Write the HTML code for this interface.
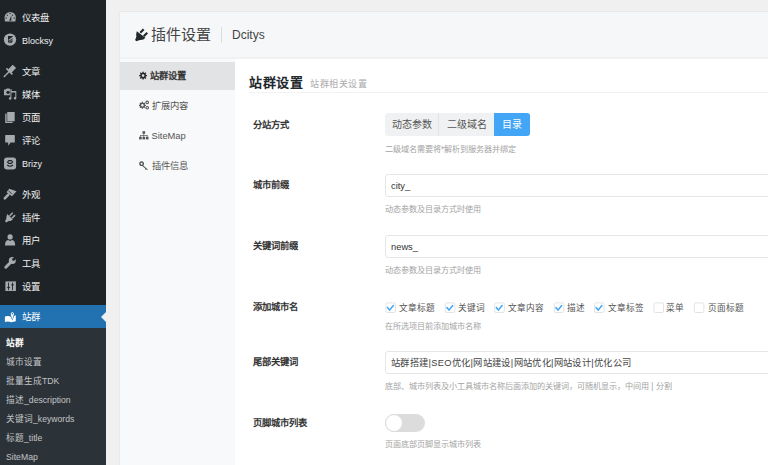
<!DOCTYPE html>
<html lang="zh-CN">
<head>
<meta charset="utf-8">
<style>
*{margin:0;padding:0;box-sizing:border-box}
html,body{width:768px;height:465px;overflow:hidden;background:#f0f0f1;font-family:"Liberation Sans",sans-serif;position:relative}
.a{position:absolute;white-space:nowrap}
#side{position:absolute;left:0;top:0;width:106px;height:465px;background:#1d2327}
#sub{position:absolute;left:0;top:328px;width:106px;height:137px;background:#2c3338}
#act{position:absolute;left:0;top:305px;width:106px;height:23px;background:#2271b1}
.mi{position:absolute;left:22px;height:14px;line-height:14px;font-size:9.4px;color:#f0f0f1}
.ic{position:absolute;left:4px;width:13px;height:13px}
.si{position:absolute;left:6px;height:14px;line-height:14px;font-size:8.67px;color:#c3c4c7}
#arrow{position:absolute;left:101px;top:312px;width:0;height:0;border-top:5px solid transparent;border-bottom:5px solid transparent;border-right:5px solid #f0f0f1}
#panel{position:absolute;left:119px;top:11px;width:662px;height:470px;background:#fff;border:1px solid #e9e9ea}
#hdr{position:absolute;left:120px;top:12px;width:660px;height:47px;background:#f6f7f9;border-bottom:2px solid #f0f1f3}
#nav{position:absolute;left:120px;top:59px;width:115px;height:420px;background:#f8f9fa}
#navact{position:absolute;left:120px;top:62px;width:115px;height:28px;background:#e2e3e5}
.ni{position:absolute;left:150px;height:14px;line-height:14px;font-size:9.33px;color:#555}
.lbl{position:absolute;left:253px;height:14px;line-height:14px;font-size:9.33px;font-weight:bold;color:#333}
.help{position:absolute;left:385px;height:12px;line-height:12px;font-size:8.15px;color:#a3a3a3}
.inp{position:absolute;left:385px;width:400px;height:23px;border:1px solid #e5e6e8;border-radius:3px;background:#fff}
.inpt{position:absolute;left:391px;height:14px;line-height:14px;font-size:9.33px;color:#333}
.cb{position:absolute;top:303px;width:10px;height:10px;border:1px solid #d4d6d9;border-radius:2px;background:#fff}
.cbl{position:absolute;top:301px;height:14px;line-height:14px;font-size:8.67px;color:#555;letter-spacing:0.1px}
</style>
</head>
<body>
<div id="side"></div>
<div id="sub"></div>
<div id="act"></div>
<div id="arrow"></div>
<svg class="a" style="left:0;top:0" width="106" height="465" viewBox="0 0 106 465">
<g fill="#a7aaad">
<path d="M4.9,21.6 L4.6,17.2 A5.6,5.3 0 0 1 15.8,17.2 L15.4,21.6 Z"/>
<g fill="#1d2327"><circle cx="10.1" cy="13.5" r="0.65"/><circle cx="7.3" cy="15.2" r="0.65"/><circle cx="12.6" cy="15.2" r="0.65"/><circle cx="6.1" cy="18" r="0.65"/><circle cx="14.2" cy="18" r="0.65"/>
<path d="M9.3,20.8 L11.3,15.2 L11.3,20.8 Z"/></g>
<circle cx="10" cy="39.6" r="6.15"/>
<path fill="#1d2327" d="M8,36.1 H12.7 V37.6 L12.4,38.6 V41.4 Q12.3,42.7 11,42.7 H8 Z"/>
<path d="M8.6,40.4 L12.9,37.2" stroke="#a7aaad" stroke-width="1.1"/>
<path d="M8.3,42.6 L12.6,39.4" stroke="#a7aaad" stroke-width="0.6"/>
<g transform="translate(14.4,66.4) rotate(45) scale(1.25)"><path d="M-1.9,0 H1.9 V5 H3.4 V6.3 H0.55 V12 H-0.55 V6.3 H-3.4 V5 H-1.9 Z"/></g>
<path d="M4,89.6 H5.8 L6.7,88.4 H9.4 L10.2,89.6 H12 V95.2 H4 Z"/>
<circle cx="8" cy="92.3" r="1.6" fill="#1d2327"/>
<path fill="#1d2327" d="M9.8,90.6 H17 V100 H9.8 Z"/>
<path d="M10.4,91 H16.3 V98.2 A1.3,1.3 0 1 1 15.3,97 V92.6 H11.4 V98.4 A1.3,1.3 0 1 1 10.4,97.2 Z"/>
<rect x="5.2" y="113.6" width="7.4" height="9.4" rx="0.5"/>
<rect x="6.6" y="111.4" width="8.6" height="10.3" fill="#1d2327"/>
<rect x="7.2" y="111.9" width="7.5" height="9.3" rx="0.3"/>
<path d="M5.6,134.9 H14.4 Q14.8,134.9 14.8,135.4 V142 Q14.8,142.5 14.4,142.5 H10.6 L8.2,145.8 V142.5 H5.6 Q5.2,142.5 5.2,142 V135.4 Q5.2,134.9 5.6,134.9 Z"/>
<rect x="4" y="157.5" width="12.1" height="12" rx="3"/>
<g fill="none" stroke="#1d2327" stroke-width="1.1"><path d="M7.2,165 Q10.1,167.6 13,165"/><path d="M7.5,162 L8.8,160.6 H11.3 L12.6,162 L11.3,163.4 H8.8 Z"/></g>
<path d="M9.2,188.8 L16.5,191.3 L12,196.3 L6.5,192.2 Z"/>
<path d="M8.4,190.6 L11.9,194.2" stroke="#1d2327" stroke-width="0.8"/>
<path d="M8.4,194.6 L4.8,198.4" stroke="#a7aaad" stroke-width="2.6" stroke-linecap="round"/>
<path d="M7.2,213.9 L12.9,219.6 L10.5,221 L8.6,221.1 L6.2,222.4 L5,221.2 L6.3,218.8 L6.4,216.9 Z"/>
<path d="M9.1,215.4 L12.1,212.3 L13.2,213.3 L10.1,216.4 Z"/>
<path d="M11.4,217.7 L14.5,214.6 L15.6,215.7 L12.5,218.7 Z"/>
<circle cx="10.1" cy="236.9" r="2.6"/>
<path d="M5,245.6 Q5,240.3 8.2,240 L10.1,241 L12,240 Q15.2,240.3 15.2,245.6 Z"/>
<path d="M5.8,267.2 L11,262" stroke="#a7aaad" stroke-width="3" stroke-linecap="round"/>
<circle cx="12.3" cy="260.6" r="3.5"/>
<circle cx="13.6" cy="259.4" r="1.4" fill="#1d2327"/>
<path d="M12.8,258.6 L15.2,256 L17.2,258 L14.4,260.2 Z" fill="#1d2327"/>
<rect x="5.4" y="281.4" width="10.5" height="9.6"/>
<g fill="#1d2327"><rect x="8.1" y="282.6" width="0.9" height="7.6"/><rect x="12.1" y="282.6" width="0.9" height="7.6"/><rect x="7.2" y="287" width="2.7" height="1"/><rect x="11.2" y="284.4" width="2.7" height="1"/></g>
</g>
<path fill="#fff" d="M4.9,316.4 Q8,315.2 11.3,316.8 Q13.5,316 15.8,315.2 V321.2 Q13.5,321.6 11.3,322.2 Q8,320.8 4.9,322 Z"/>
<path fill="#2271b1" d="M12.3,320.6 L9.9,314.6 A2.5,2.5 0 1 1 14.7,314.6 Z"/>
<path fill="#fff" d="M12.3,319.6 L10.8,314.4 A1.6,1.6 0 1 1 13.8,314.4 Z"/>
<circle cx="12.3" cy="313.7" r="0.7" fill="#2271b1"/>
</svg>

<div class="mi" style="top:11px">仪表盘</div>
<div class="mi" style="top:34px;font-size:9px">Blocksy</div>
<div class="mi" style="top:65px">文章</div>
<div class="mi" style="top:88px">媒体</div>
<div class="mi" style="top:111px">页面</div>
<div class="mi" style="top:134px">评论</div>
<div class="mi" style="top:157px;font-size:9px">Brizy</div>
<div class="mi" style="top:188px">外观</div>
<div class="mi" style="top:211px">插件</div>
<div class="mi" style="top:234px">用户</div>
<div class="mi" style="top:257px">工具</div>
<div class="mi" style="top:280px">设置</div>
<div class="mi" style="top:310px;color:#fff">站群</div>

<div class="si" style="top:336px;color:#fff;font-weight:bold">站群</div>
<div class="si" style="top:355px">城市设置</div>
<div class="si" style="top:374px">批量生成TDK</div>
<div class="si" style="top:393px">描述_description</div>
<div class="si" style="top:412px">关键词_keywords</div>
<div class="si" style="top:431px">标题_title</div>
<div class="si" style="top:450px">SiteMap</div>

<div id="panel"></div>
<div id="hdr"></div>
<div id="nav"></div>
<div id="navact"></div>

<div class="a" style="left:151px;top:26px;height:18px;line-height:18px;font-size:15px;color:#444">插件设置</div>
<div class="a" style="left:221px;top:27px;width:1px;height:16px;background:#dcdcde"></div>
<div class="a" style="left:232px;top:27px;height:16px;line-height:16px;font-size:12px;color:#444">Dcitys</div>

<svg class="a" style="left:130px;top:20px" width="30" height="160" viewBox="130 20 30 160">
<g fill="#23282d">
<path d="M136.8,31.2 L145.4,37.7 Q143.4,40.4 139.9,40 L136.3,41.3 L135.1,40.1 L136.3,36.9 Q135.9,33.7 136.8,31.2 Z"/>
<path d="M139.5,32 L142.9,28.5 L144.5,30 L141,33.5 Z"/>
<path d="M143,35.5 L146.5,32 L148,33.6 L144.5,37 Z"/>
</g>
<g fill="#2c2c2c"><path fill-rule="evenodd" d="M146.01,74.89 L147.04,74.90 L147.04,76.30 L146.01,76.31 L145.66,77.16 L146.38,77.89 L145.39,78.88 L144.66,78.16 L143.81,78.51 L143.80,79.54 L142.40,79.54 L142.39,78.51 L141.54,78.16 L140.81,78.88 L139.82,77.89 L140.54,77.16 L140.19,76.31 L139.16,76.30 L139.16,74.90 L140.19,74.89 L140.54,74.04 L139.82,73.31 L140.81,72.32 L141.54,73.04 L142.39,72.69 L142.40,71.66 L143.80,71.66 L143.81,72.69 L144.66,73.04 L145.39,72.32 L146.38,73.31 L145.66,74.04 Z M144.40,75.60 A1.3,1.3 0 1 0 141.80,75.60 A1.3,1.3 0 1 0 144.40,75.60 Z"/></g>
<g fill="#555">
<path fill-rule="evenodd" d="M145.02,104.66 L145.85,104.68 L145.85,105.92 L145.02,105.94 L144.71,106.70 L145.27,107.30 L144.40,108.17 L143.80,107.61 L143.04,107.92 L143.02,108.75 L141.78,108.75 L141.76,107.92 L141.00,107.61 L140.40,108.17 L139.53,107.30 L140.09,106.70 L139.78,105.94 L138.95,105.92 L138.95,104.68 L139.78,104.66 L140.09,103.90 L139.53,103.30 L140.40,102.43 L141.00,102.99 L141.76,102.68 L141.78,101.85 L143.02,101.85 L143.04,102.68 L143.80,102.99 L144.40,102.43 L145.27,103.30 L144.71,103.90 Z M143.65,105.30 A1.25,1.25 0 1 0 141.15,105.30 A1.25,1.25 0 1 0 143.65,105.30 Z"/><circle cx="147.2" cy="102.4" r="1.8"/><circle cx="147.2" cy="102.4" r="0.75" fill="#f8f9fa"/><circle cx="147.2" cy="107.7" r="1.8"/><circle cx="147.2" cy="107.7" r="0.75" fill="#f8f9fa"/>
<rect x="142.5" y="131.2" width="2.6" height="2.6"/>
<rect x="143.5" y="133.6" width="0.6" height="1.6"/>
<rect x="140.2" y="135" width="7.2" height="0.7"/>
<rect x="140.2" y="135" width="0.6" height="2"/><rect x="143.5" y="135" width="0.6" height="2"/><rect x="146.8" y="135" width="0.6" height="2"/>
<rect x="139.1" y="136.8" width="2.6" height="2.6"/><rect x="142.5" y="136.8" width="2.6" height="2.6"/><rect x="145.9" y="136.8" width="2.6" height="2.6"/>
<path fill-rule="evenodd" d="M141.6,161.2 a2.45,2.45 0 1 1 -0.001,0 Z M141.6,162.7 a0.95,0.95 0 1 0 0.001,0 Z"/>
<path d="M142.9,165.2 L147.9,169.4 L147.1,170.1 L146.1,169.3 L145.4,169.8 L144.8,169.1 L145.3,168.6 L142.2,166 Z"/>
</g>
</svg>
<div class="ni" style="top:69px;color:#333;font-weight:bold">站群设置</div>
<div class="ni" style="top:99px;left:151.5px">扩展内容</div>
<div class="ni" style="top:129px;left:151.5px">SiteMap</div>
<div class="ni" style="top:159px;left:151.5px">插件信息</div>

<div class="a" style="left:249px;top:74px;height:18px;line-height:18px;font-size:13px;letter-spacing:0.7px;font-weight:bold;color:#23282d">站群设置</div>
<div class="a" style="left:310px;top:77px;height:14px;line-height:14px;font-size:9px;letter-spacing:0.55px;color:#aaa">站群相关设置</div>
<div class="a" style="left:249px;top:92px;width:530px;height:1px;background:#f1f2f3"></div>

<div class="lbl" style="top:118px">分站方式</div>
<div class="lbl" style="top:178px">城市前缀</div>
<div class="lbl" style="top:239px">关键词前缀</div>
<div class="lbl" style="top:300px">添加城市名</div>
<div class="lbl" style="top:355px">尾部关键词</div>
<div class="lbl" style="top:416px">页脚城市列表</div>

<!-- segmented -->
<div class="a" style="left:385px;top:113px;width:145px;height:23px;background:#f0f1f2;border-radius:3px;overflow:hidden">
  <div class="a" style="left:0;top:0;width:54px;height:23px;line-height:24px;text-align:center;font-size:10px;color:#555;border-right:1px solid #e2e3e5">动态参数</div>
  <div class="a" style="left:55px;top:0;width:54px;height:23px;line-height:24px;text-align:center;font-size:10px;color:#555">二级域名</div>
  <div class="a" style="left:109px;top:0;width:36px;height:23px;line-height:24px;text-align:center;font-size:10px;color:#fff;background:#42a5f5">目录</div>
</div>
<div class="help" style="top:144px">二级域名需要将*解析到服务器并绑定</div>

<div class="inp" style="top:174px"></div>
<div class="inpt" style="top:179px">city_</div>
<div class="help" style="top:204px">动态参数及目录方式时使用</div>

<div class="inp" style="top:235px"></div>
<div class="inpt" style="top:240px">news_</div>
<div class="help" style="top:265px">动态参数及目录方式时使用</div>

<svg class="a" style="left:0;top:0" width="768" height="465" viewBox="0 0 768 465"><rect x="385.9" y="302.9" width="9.6" height="9.6" rx="1.5" fill="#fff" stroke="#e2e3e5" stroke-width="1"/><path d="M387.5,307.6 L389.59999999999997,310.1 L393.29999999999995,305.5" fill="none" stroke="#42a5f5" stroke-width="1.5" stroke-linecap="round" stroke-linejoin="round"/><rect x="445.3" y="302.9" width="9.6" height="9.6" rx="1.5" fill="#fff" stroke="#e2e3e5" stroke-width="1"/><path d="M446.90000000000003,307.6 L449.0,310.1 L452.7,305.5" fill="none" stroke="#42a5f5" stroke-width="1.5" stroke-linecap="round" stroke-linejoin="round"/><rect x="494.7" y="302.9" width="9.6" height="9.6" rx="1.5" fill="#fff" stroke="#e2e3e5" stroke-width="1"/><path d="M496.3,307.6 L498.4,310.1 L502.09999999999997,305.5" fill="none" stroke="#42a5f5" stroke-width="1.5" stroke-linecap="round" stroke-linejoin="round"/><rect x="554.3" y="302.9" width="9.6" height="9.6" rx="1.5" fill="#fff" stroke="#e2e3e5" stroke-width="1"/><path d="M555.9,307.6 L558.0,310.1 L561.6999999999999,305.5" fill="none" stroke="#42a5f5" stroke-width="1.5" stroke-linecap="round" stroke-linejoin="round"/><rect x="594.5" y="302.9" width="9.6" height="9.6" rx="1.5" fill="#fff" stroke="#e2e3e5" stroke-width="1"/><path d="M596.1,307.6 L598.2,310.1 L601.9,305.5" fill="none" stroke="#42a5f5" stroke-width="1.5" stroke-linecap="round" stroke-linejoin="round"/><rect x="653.9" y="302.9" width="9.6" height="9.6" rx="1.5" fill="#fff" stroke="#e2e3e5" stroke-width="1"/><rect x="694.3" y="302.9" width="9.6" height="9.6" rx="1.5" fill="#fff" stroke="#e2e3e5" stroke-width="1"/></svg>
<div class="cbl" style="left:399px">文章标题</div>
<div class="cbl" style="left:458px">关键词</div>
<div class="cbl" style="left:508px">文章内容</div>
<div class="cbl" style="left:567px">描述</div>
<div class="cbl" style="left:608px">文章标签</div>
<div class="cbl" style="left:666px">菜单</div>
<div class="cbl" style="left:708px">页面标题</div>
<div class="help" style="top:321px">在所选项目前添加城市名称</div>

<div class="inp" style="top:351px"></div>
<div class="inpt" style="top:356px;letter-spacing:0.35px;color:#444">站群搭建|SEO优化|网站建设|网站优化|网站设计|优化公司</div>
<div class="help" style="top:381px">底部、城市列表及小工具城市名称后面添加的关键词，可随机显示，中间用 | 分割</div>

<div class="a" style="left:385px;top:414px;width:40px;height:18px;border-radius:9px;background:#dcdcdc"></div>
<div class="a" style="left:385px;top:414px;width:18px;height:18px;border-radius:9px;background:#fff;border:1px solid #dcdcdc"></div>
<div class="help" style="top:439px">页面底部页脚显示城市列表</div>

</body>
</html>
